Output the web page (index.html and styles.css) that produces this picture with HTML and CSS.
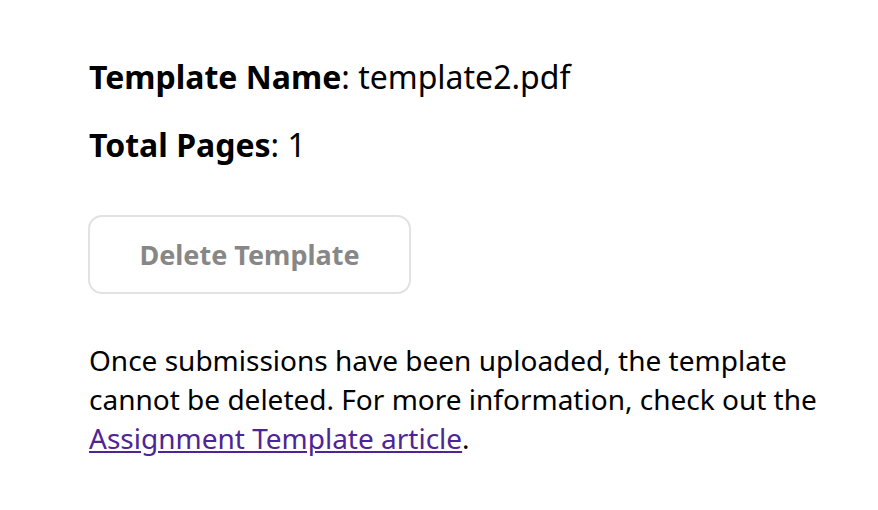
FILE: index.html
```html
<!DOCTYPE html>
<html>
<head>
<meta charset="utf-8">
<link rel="stylesheet" href="styles.css">
</head>
<body>
<main class="panel">
  <p class="info"><strong>Template Name</strong>: template2.pdf</p>
  <p class="info"><strong>Total Pages</strong>: 1</p>
  <button class="delete-btn" type="button" disabled>Delete Template</button>
  <p class="note">Once submissions have been uploaded, the template cannot be deleted. For more information, check out the <a href="#" class="link">Assignment Template article</a>.</p>
</main>
</body>
</html>
```

FILE: styles.css
```css
html, body {
  margin: 0;
  background: #ffffff;
}
body {
  font-family: "Noto Sans", "Open Sans", sans-serif;
  color: #000;
}
.panel {
  padding: 56px 0 0 89px;
  width: 745px;
  display: flex;
  flex-direction: column;
  align-items: flex-start;
}
.info {
  margin: 0 0 26px 0;
  font-size: 32px;
  line-height: 42px;
}
.info strong {
  font-weight: 700;
}
.delete-btn {
  margin-top: 23px;
  margin-left: -1px;
  width: 323px;
  height: 79px;
  border: 2px solid #e2e2e2;
  border-radius: 14px;
  background: #fff;
  font-family: "Noto Sans", sans-serif;
  font-size: 27px;
  font-weight: 700;
  color: #878787;
  padding: 0;
}
.note {
  margin: 47px 0 0 0;
  font-size: 28px;
  line-height: 39px;
}
.link {
  color: #4e2596;
  text-decoration: underline;
}
```
